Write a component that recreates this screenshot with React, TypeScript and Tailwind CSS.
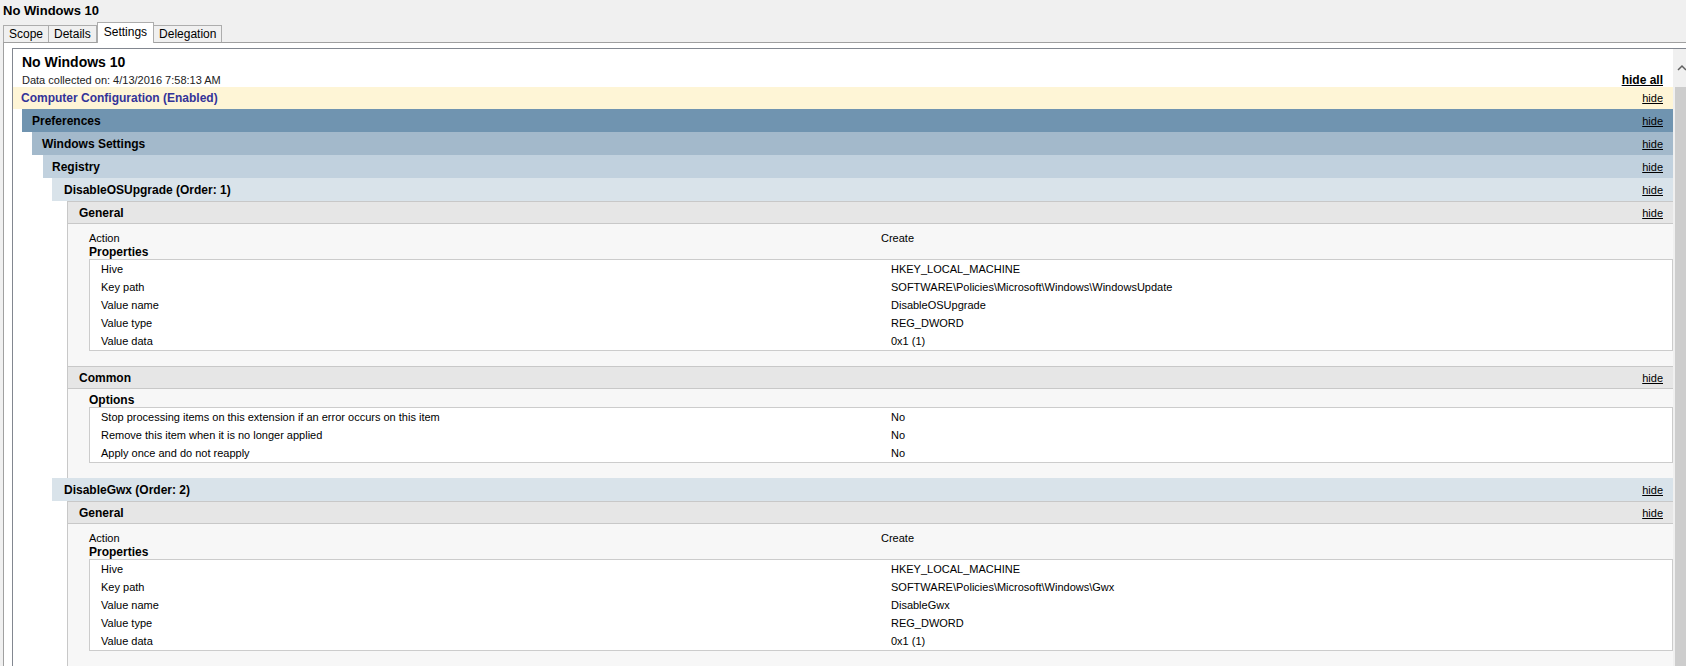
import React from 'react'

type Row = [string, string]

const registryItems: { name: string; props: Row[]; showCommon: boolean }[] = [
  {
    name: 'DisableOSUpgrade (Order: 1)',
    props: [
      ['Hive', 'HKEY_LOCAL_MACHINE'],
      ['Key path', 'SOFTWARE\\Policies\\Microsoft\\Windows\\WindowsUpdate'],
      ['Value name', 'DisableOSUpgrade'],
      ['Value type', 'REG_DWORD'],
      ['Value data', '0x1 (1)'],
    ],
    showCommon: true,
  },
  {
    name: 'DisableGwx (Order: 2)',
    props: [
      ['Hive', 'HKEY_LOCAL_MACHINE'],
      ['Key path', 'SOFTWARE\\Policies\\Microsoft\\Windows\\Gwx'],
      ['Value name', 'DisableGwx'],
      ['Value type', 'REG_DWORD'],
      ['Value data', '0x1 (1)'],
    ],
    // below the fold in the screenshot
    showCommon: false,
  },
]

const commonOptions: Row[] = [
  ['Stop processing items on this extension if an error occurs on this item', 'No'],
  ['Remove this item when it is no longer applied', 'No'],
  ['Apply once and do not reapply', 'No'],
]

const tabs = ['Scope', 'Details', 'Settings', 'Delegation']

function Band({ title, className, titleClass }: { title: string; className: string; titleClass?: string }) {
  return (
    <div className={`flex items-center justify-between pr-[10px] box-border ${className}`}>
      <span className={`text-[12px] font-bold leading-[14px] ${titleClass ?? 'text-black'}`}>{title}</span>
      <span className="text-[11px] leading-[14px] text-black underline cursor-pointer">hide</span>
    </div>
  )
}

function InfoTable({ rows }: { rows: Row[] }) {
  return (
    <div className="bg-white border border-[#cccccc]">
      {rows.map(([k, v]) => (
        <div key={k} className="flex h-[18px] items-center text-[11px]">
          <div className="w-[801px] shrink-0 pl-[11px]">{k}</div>
          <div>{v}</div>
        </div>
      ))}
    </div>
  )
}

function SubSection({ title, children }: { title: string; children: React.ReactNode }) {
  return (
    <div>
      <Band title={title} className="h-[23px] pl-[11px] bg-[#e6e6e6] border-y border-[#c8c8c8]" />
      <div className="pl-[21px] pb-[15px]">{children}</div>
    </div>
  )
}

function RegistryItem({ name, props, showCommon }: { name: string; props: Row[]; showCommon: boolean }) {
  return (
    <div className="ml-[9px]">
      <Band title={name} className="h-[23px] pl-[12px] bg-[#d9e3ea]" />
      <div className="ml-[15px] border-l border-[#c8c8c8] bg-[#f7f7f7]">
        <SubSection title="General">
          <div className="pt-[6px]">
            <div className="flex h-[16px] items-center text-[11px]">
              <div className="w-[792px] shrink-0">Action</div>
              <div>Create</div>
            </div>
            <div className="h-[13px] text-[12px] font-bold leading-[13px]">Properties</div>
            <InfoTable rows={props} />
          </div>
        </SubSection>
        {showCommon && (
          <SubSection title="Common">
            <div className="pt-[5px]">
              <div className="h-[13px] text-[12px] font-bold leading-[13px]">Options</div>
              <InfoTable rows={commonOptions} />
            </div>
          </SubSection>
        )}
      </div>
    </div>
  )
}

export default function App() {
  return (
    <div className="w-[1686px] h-[666px] overflow-hidden bg-[#f0f0f0] text-black font-['Liberation_Sans',Arial,sans-serif] flex flex-col">
      {/* window title */}
      <div className="h-[22px] shrink-0 pl-[3px] pt-[3px] text-[13px] font-bold leading-[16px]">No Windows 10</div>

      {/* tabs */}
      <div className="h-[20px] shrink-0 flex items-end pl-[3px]">
        {tabs.map((t) =>
          t === 'Settings' ? (
            <div
              key={t}
              className="relative z-10 -mb-px h-[21px] px-[6px] bg-white border border-b-0 border-[#adadad] text-[12px] leading-[16px] pt-[1px]"
            >
              {t}
            </div>
          ) : (
            <div
              key={t}
              className="h-[17px] px-[5px] bg-[#f0f0f0] border border-b-0 border-[#adadad] -ml-px first:ml-0 text-[12px] leading-[16px]"
            >
              {t}
            </div>
          )
        )}
      </div>

      {/* tab panel */}
      <div className="flex-1 min-h-0 ml-[3px] bg-white border-t border-l border-[#a0a0a0] pl-[8px] pt-[5px] flex">
        <div className="flex-1 min-w-0 border-t border-l border-[#828790] flex">
          <div className="flex-1 min-w-0 overflow-hidden bg-white">
            <div className="pl-[9px] pr-[10px] pt-[4px]">
              <div className="h-[18px] text-[14px] font-bold leading-[18px]">No Windows 10</div>
              <div className="mt-[2px] h-[14px] flex items-center justify-between">
                <span className="text-[11px] leading-[14px] text-[#222]">Data collected on: 4/13/2016 7:58:13 AM</span>
                <span className="text-[12px] font-bold leading-[14px] underline">hide all</span>
              </div>
            </div>

            <Band
              title="Computer Configuration (Enabled)"
              className="h-[22px] pl-[8px] bg-[#fef5d6]"
              titleClass="text-[#333399]"
            />
            <div className="ml-[9px]">
              <Band title="Preferences" className="h-[23px] pl-[10px] bg-[#7094b0]" />
              <div className="ml-[10px]">
                <Band title="Windows Settings" className="h-[23px] pl-[10px] bg-[#a3b9cb]" />
                <div className="ml-[11px]">
                  <Band title="Registry" className="h-[23px] pl-[9px] bg-[#c1d1de]" />
                  {registryItems.map((item) => (
                    <RegistryItem key={item.name} {...item} />
                  ))}
                  <div className="h-[40px] ml-[24px] border-l border-[#c8c8c8] bg-[#f7f7f7]" />
                </div>
              </div>
            </div>
          </div>

          {/* scrollbar */}
          <div className="w-[13px] shrink-0 bg-[#f0f0f0] flex flex-col">
            <div className="h-[38px] shrink-0 flex items-center">
              <svg width="13" height="8" viewBox="0 0 13 8">
                <polyline points="5,6 9,2 13,6" fill="none" stroke="#606060" strokeWidth="1.5" />
              </svg>
            </div>
            <div className="flex-1 ml-[2px] bg-[#cdcdcd]" />
          </div>
        </div>
      </div>
    </div>
  )
}
